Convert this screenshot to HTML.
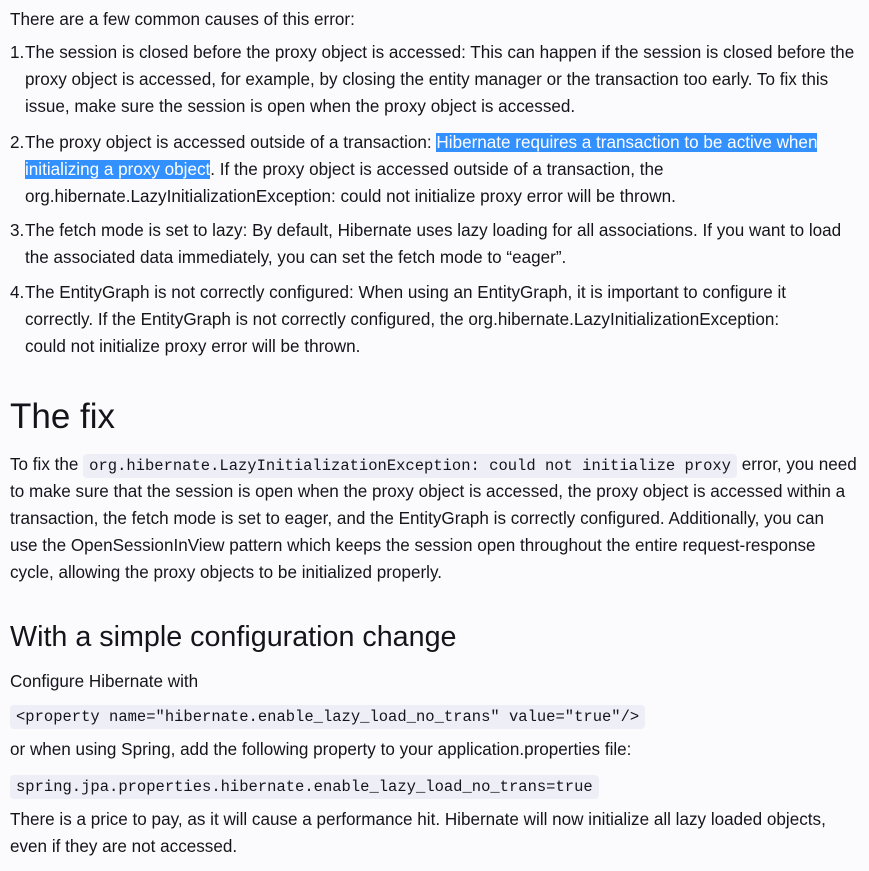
<!DOCTYPE html>
<html><head><meta charset="utf-8"><style>
body{margin:0;background:#fbfbfe;color:#15141a;font-family:"Liberation Sans",sans-serif;font-size:17.1px;width:869px;height:871px;overflow:hidden;position:relative}
.l{position:absolute;left:10px;white-space:nowrap;line-height:27px;height:27px}
.i{left:25px}
.n{position:absolute;left:10px;line-height:27px}
code{font-family:"Liberation Mono",monospace;font-size:15.5px;background:#eeeef6;border-radius:4px;padding:3px 6px}
.hl{background:#3390ff;color:#fff}
h1,h2{margin:0;font-weight:normal;position:absolute;left:10px;white-space:nowrap}
</style></head><body>
<div class="l" style="top:6px">There are a few common causes of this error:</div>
<div class="n" style="top:39px">1.</div>
<div class="l i" style="top:39px">The session is closed before the proxy object is accessed: This can happen if the session is closed before the</div>
<div class="l i" style="top:66px">proxy object is accessed, for example, by closing the entity manager or the transaction too early. To fix this</div>
<div class="l i" style="top:93px">issue, make sure the session is open when the proxy object is accessed.</div>
<div class="n" style="top:129px">2.</div>
<div class="l i" style="top:129px">The proxy object is accessed outside of a transaction: <span class="hl">Hibernate requires a transaction to be active when</span></div>
<div class="l i" style="top:156px"><span class="hl">initializing a proxy object</span>. If the proxy object is accessed outside of a transaction, the</div>
<div class="l i" style="top:183px">org.hibernate.LazyInitializationException: could not initialize proxy error will be thrown.</div>
<div class="n" style="top:217px">3.</div>
<div class="l i" style="top:217px">The fetch mode is set to lazy: By default, Hibernate uses lazy loading for all associations. If you want to load</div>
<div class="l i" style="top:244px">the associated data immediately, you can set the fetch mode to “eager”.</div>
<div class="n" style="top:279px">4.</div>
<div class="l i" style="top:279px">The EntityGraph is not correctly configured: When using an EntityGraph, it is important to configure it</div>
<div class="l i" style="top:306px">correctly. If the EntityGraph is not correctly configured, the org.hibernate.LazyInitializationException:</div>
<div class="l i" style="top:333px">could not initialize proxy error will be thrown.</div>
<h1 style="top:394px;font-size:35px;line-height:46px">The fix</h1>
<div class="l" style="top:451px">To fix the <code>org.hibernate.LazyInitializationException: could not initialize proxy</code> error, you need</div>
<div class="l" style="top:478px">to make sure that the session is open when the proxy object is accessed, the proxy object is accessed within a</div>
<div class="l" style="top:505px">transaction, the fetch mode is set to eager, and the EntityGraph is correctly configured. Additionally, you can</div>
<div class="l" style="top:532px">use the OpenSessionInView pattern which keeps the session open throughout the entire request-response</div>
<div class="l" style="top:559px">cycle, allowing the proxy objects to be initialized properly.</div>
<h2 style="top:619px;font-size:28.7px;line-height:36px">With a simple configuration change</h2>
<div class="l" style="top:668px">Configure Hibernate with</div>
<div class="l" style="top:702px"><code>&lt;property name="hibernate.enable_lazy_load_no_trans" value="true"/&gt;</code></div>
<div class="l" style="top:736px">or when using Spring, add the following property to your application.properties file:</div>
<div class="l" style="top:772px"><code>spring.jpa.properties.hibernate.enable_lazy_load_no_trans=true</code></div>
<div class="l" style="top:806px">There is a price to pay, as it will cause a performance hit. Hibernate will now initialize all lazy loaded objects,</div>
<div class="l" style="top:833px">even if they are not accessed.</div>
</body></html>
